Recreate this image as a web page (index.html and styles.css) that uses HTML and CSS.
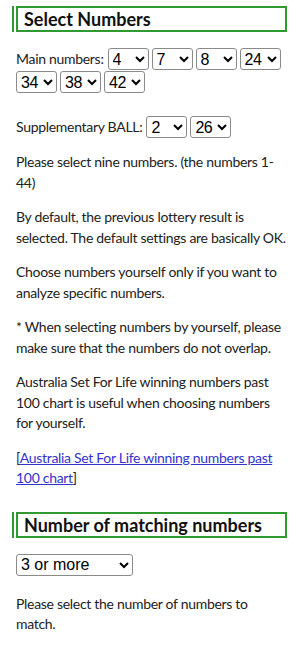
FILE: index.html
```html
<!DOCTYPE html>
<html lang="en">
<head>
    <meta charset="UTF-8">
    <meta name="viewport" content="width=device-width, initial-scale=1.0">
    <title>Select Numbers</title>
    <link rel="stylesheet" href="styles.css">
</head>
<body>
    <div class="page">
        <h2 class="title"><span>Select Numbers</span></h2>

        <div class="section">
            <div class="pick-row">
                <span class="label">Main numbers:</span>
                <select class="num"><option>4</option></select>
                <select class="num"><option>7</option></select>
                <select class="num"><option>8</option></select>
                <select class="num"><option>24</option></select>
                <select class="num"><option>34</option></select>
                <select class="num"><option>38</option></select>
                <select class="num"><option>42</option></select>
            </div>

            <div class="pick-row supp">
                <span class="label">Supplementary BALL:</span>
                <select class="num"><option>2</option></select>
                <select class="num"><option>26</option></select>
            </div>

            <p>Please select nine numbers. (the numbers 1-44)</p>
            <p>By default, the previous lottery result is selected. The default settings are basically OK.</p>
            <p>Choose numbers yourself only if you want to analyze specific numbers.</p>
            <p>* When selecting numbers by yourself, please make sure that the numbers do not overlap.</p>
            <p>Australia Set For Life winning numbers past 100 chart is useful when choosing numbers for yourself.</p>
            <p>[<a href="#">Australia Set For Life winning numbers past 100 chart</a>]</p>
        </div>

        <h2 class="title"><span>Number of matching numbers</span></h2>

        <div class="section">
            <select class="match">
                <option>3 or more</option>
                <option>4 or more</option>
                <option>5 or more</option>
            </select>
            <p class="note">Please select the number of numbers to match.</p>
        </div>
    </div>
</body>
</html>
```

FILE: styles.css
```css
* {
    box-sizing: border-box;
}

body {
    margin: 0;
    background-color: #ffffff;
    color: #222;
    font-family: "Lato", "Noto Sans", sans-serif;
    font-size: 14px;
    letter-spacing: -0.3px;
    line-height: 20.5px;
}

.page {
    padding: 6px 13px 0 12px;
}

/* Section headings */
.title {
    margin: 0;
    border-left: 2px solid #2f9a2f;
    padding-left: 2px;
    letter-spacing: 0;
}

.title span {
    display: block;
    border: 2px solid #2f9a2f;
    padding: 0 6px;
    font-size: 18px;
    line-height: 22px;
    font-weight: bold;
    color: #111;
}

.section {
    padding: 16px 0 0 4px;
    margin-bottom: 23px;
}

.section p {
    margin: 14px 0 0;
}

.section p.note {
    margin-top: 18px;
}

/* Number pickers */
.pick-row {
    display: flex;
    flex-wrap: wrap;
    align-items: center;
    gap: 1px 3px;
}

.pick-row .label {
    margin-right: 1px;
}

.pick-row.supp {
    margin-top: 23px;
}

select {
    font-family: "Liberation Sans", Arial, sans-serif;
    font-size: 16px;
    letter-spacing: -0.5px;
    height: 22px;
    color: #000;
    background-color: #fff;
    border: 1px solid #8a8a8a;
    border-radius: 3px;
    padding: 0;
}

.num {
    width: 41px;
}

.match {
    width: 117px;
    letter-spacing: 0;
}

a {
    color: #3333cc;
}
```
